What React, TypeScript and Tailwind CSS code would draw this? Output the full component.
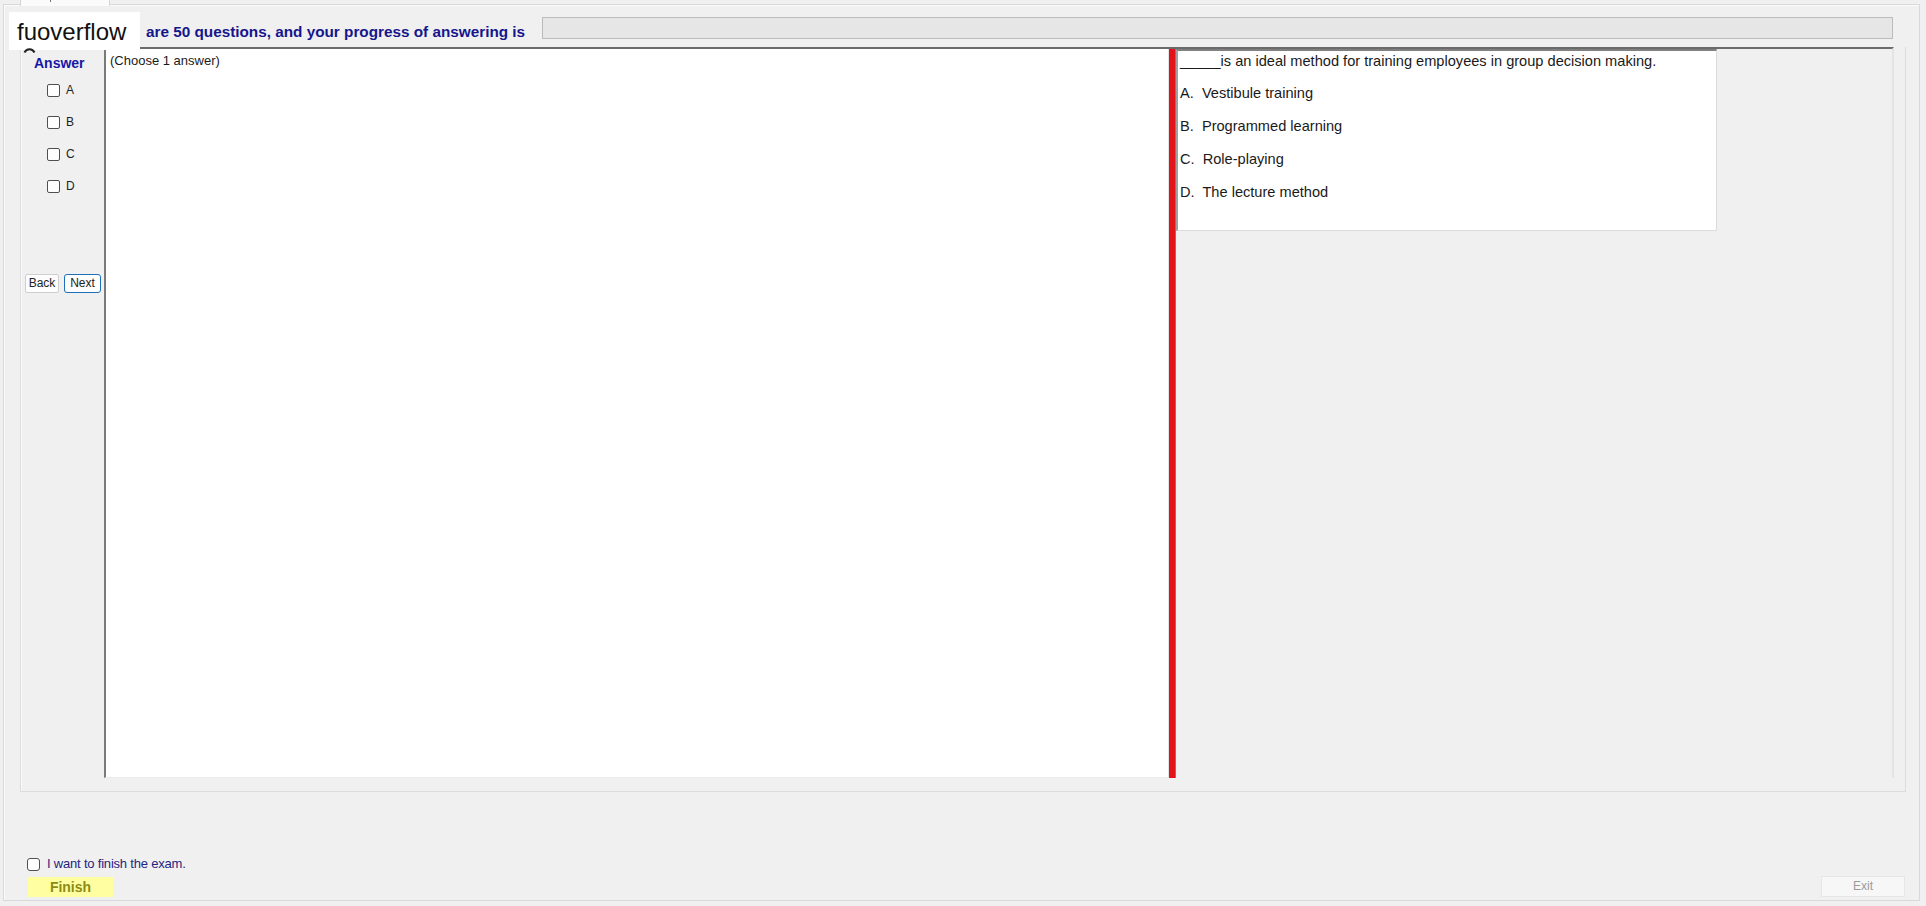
import React from "react";

function Box({ className = "" }: { className?: string }) {
  return (
    <span
      className={
        "inline-block w-[13px] h-[13px] shrink-0 border border-[#505050] rounded-[2px] bg-white " +
        className
      }
    />
  );
}

const letters = ["A", "B", "C", "D"];

const options = [
  "A.  Vestibule training",
  "B.  Programmed learning",
  "C.  Role-playing",
  "D.  The lecture method",
];

export default function App() {
  return (
    <div className="relative w-[1926px] h-[906px] overflow-hidden bg-[#f0f0f0] font-['Liberation_Sans',Arial,sans-serif] text-[#1a1a1a]">
      {/* tab header strip */}
      <div className="h-[4px]">
        <div className="relative z-10 ml-[20px] w-[90px] h-[6px] bg-[#fbfbfb] border-x border-[#d6d6d6]">
          <span className="absolute left-[29px] top-0 w-[1px] h-[2px] bg-[#777]" />
        </div>
      </div>

      {/* tab page */}
      <div className="ml-[3px] w-[1917px] h-[897px] border border-[#d9d9d9] shadow-[inset_1px_1px_0_#fbfbfb] flex flex-col">
        {/* progress header */}
        <div className="h-[42px] flex items-start pl-[142px]">
          <div className="mt-[18px] w-[380px] whitespace-nowrap text-[15.3px] leading-[18px] font-bold text-[#16168c]">
            are 50 questions, and your progress of answering is
          </div>
          <div className="mt-[12px] ml-[16px] w-[1351px] h-[22px] bg-[#e6e6e6] border border-[#bcbcbc]" />
        </div>

        {/* answer group */}
        <div className="ml-[16px] w-[1886px] h-[745px] border-x border-b border-[#dcdcdc] shadow-[inset_1px_0_0_#fafafa] flex">
          {/* answer column */}
          <div className="w-[83px] flex flex-col">
            <div className="mt-[8px] ml-[13px] text-[14px] leading-[16px] font-bold text-[#1717a6]">
              Answer
            </div>
            <div className="mt-[11px] flex flex-col gap-[16px]">
              {letters.map((l) => (
                <div key={l} className="h-[16px] ml-[26px] flex items-center gap-[6px]">
                  <Box />
                  <span className="text-[12px] leading-[16px] text-[#222]">{l}</span>
                </div>
              ))}
            </div>
            <div className="mt-[80px] ml-[4px] flex gap-[5px]">
              <button className="w-[34px] h-[19px] bg-[#fdfdfd] border border-[#cfcfcf] rounded-[2px] text-[12px] leading-[17px] text-[#222]">
                Back
              </button>
              <button className="w-[37px] h-[19px] bg-[#fdfdfd] border border-[#1c6fb8] rounded-[3px] text-[12px] leading-[17px] text-[#222]">
                Next
              </button>
            </div>
          </div>

          {/* split container */}
          <div className="w-[1790px] h-[731px] border-t-2 border-t-[#6b6b6b] border-r-2 border-r-[#e4e4e4] flex">
            <div className="w-[1065px] h-full bg-white border-l-2 border-l-[#7a7a7a] border-r border-r-[#e3e3e3] border-b border-b-[#ececec] pt-[4px] pl-[4px]">
              <div className="text-[13px] leading-[16px] text-[#1a1a1a]">(Choose 1 answer)</div>
            </div>
            <div className="w-[7px] h-full bg-[#e2141a] border-r border-r-[#7a7a92]" />
            <div className="flex-1 h-full bg-[#f0f0f0]">
              <div className="w-[541px] h-[182px] bg-white border-t-2 border-t-[#808080] border-l-2 border-l-[#a0a0a0] border-r border-b border-[#dcdcdc] pl-[2px] text-[14.6px] leading-[20px] text-[#1a1a1a]">
                <div className="whitespace-pre">_____is an ideal method for training employees in group decision making.</div>
                {options.map((o, i) => (
                  <div key={o} className={(i === 0 ? "mt-[12px]" : "mt-[13px]") + " whitespace-pre"}>
                    {o}
                  </div>
                ))}
              </div>
            </div>
          </div>
        </div>

        {/* finish area */}
        <div className="flex-1 flex flex-col">
          <div className="mt-[65px] ml-[23px] h-[14px] flex items-center gap-[7px]">
            <Box className="w-[12px] h-[12px] rounded-[3px] border-[#6a6a6a]" />
            <span className="text-[13px] leading-[14px] text-[#242480] tracking-[-0.2px]">
              I want to finish the exam.
            </span>
          </div>
          <div className="mt-[5px] flex items-start justify-between">
            <button className="ml-[24px] mt-[1px] w-[85px] h-[20px] bg-[#ffffa2] text-[14px] leading-[20px] font-bold text-[#8c8c12]">
              Finish
            </button>
            <button className="mr-[14px] w-[84px] h-[21px] bg-[#f7f7f7] border border-[#e6e6e6] text-[12px] leading-[19px] text-[#9a9a9a]">
              Exit
            </button>
          </div>
        </div>
      </div>

      {/* watermark label over the header */}
      <div className="absolute left-[9px] top-[12px] w-[131px] h-[38px] bg-white pl-[8px] text-[24px] leading-[40px] text-[#111]">
        fuoverflow
      </div>
      <svg className="absolute left-[23px] top-[48px]" width="13" height="5" viewBox="0 0 13 5">
        <path d="M1.5 4.5 A5.5 5.5 0 0 1 11.5 4.5" fill="none" stroke="#222" strokeWidth="2" />
      </svg>
    </div>
  );
}
